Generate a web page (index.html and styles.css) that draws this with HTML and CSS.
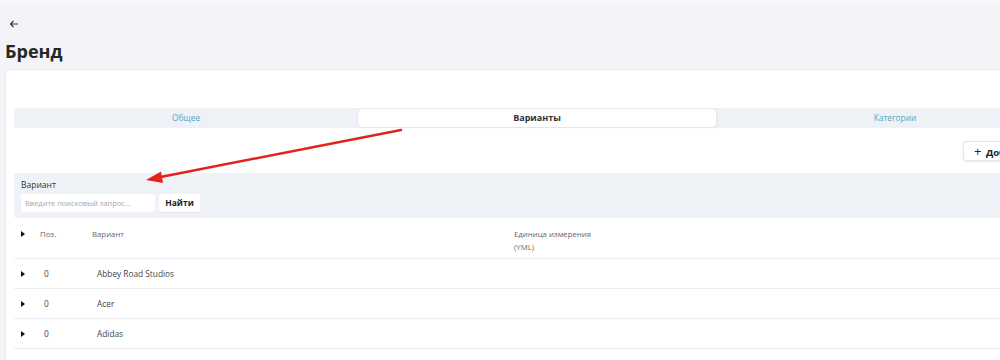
FILE: index.html
```html
<!DOCTYPE html>
<html>

	<head>
		<meta charset="UTF-8">
		<title>Бренд</title>
		<link rel="stylesheet" href="styles.css">
	</head>

	<body>
		<div class="page">
			<div class="back">
				<svg width="10" height="10" viewBox="0 0 10 10"><path d="M9 5H1.5M4.5 2L1.5 5L4.5 8" fill="none" stroke="#333" stroke-width="1.1"/></svg>
			</div>
			<h1 class="title">Бренд</h1>

			<div class="card">
				<div class="tabs">
					<div class="tab">Общее</div>
					<div class="tab active">Варианты</div>
					<div class="tab">Категории</div>
				</div>

				<div class="toolbar">
					<div class="btn-add"><span class="plus">+</span> Добавить</div>
				</div>

				<div class="filter">
					<div class="filter-label">Вариант</div>
					<div class="filter-row">
						<div class="input">Введите поисковый запрос...</div>
						<div class="btn-find">Найти</div>
					</div>
				</div>

				<div class="table">
					<div class="row head">
						<div class="c-arrow"><i class="tri"></i></div>
						<div class="c-pos">Поз.</div>
						<div class="c-name">Вариант</div>
						<div class="c-unit">Единица измерения<br>(YML)</div>
					</div>
					<div class="row">
						<div class="c-arrow"><i class="tri"></i></div>
						<div class="c-pos">0</div>
						<div class="c-name">Abbey Road Studios</div>
						<div class="c-unit"></div>
					</div>
					<div class="row">
						<div class="c-arrow"><i class="tri"></i></div>
						<div class="c-pos">0</div>
						<div class="c-name">Acer</div>
						<div class="c-unit"></div>
					</div>
					<div class="row">
						<div class="c-arrow"><i class="tri"></i></div>
						<div class="c-pos">0</div>
						<div class="c-name">Adidas</div>
						<div class="c-unit"></div>
					</div>
					<div class="row">
						<div class="c-arrow"><i class="tri"></i></div>
						<div class="c-pos">0</div>
						<div class="c-name">Aiwa</div>
						<div class="c-unit"></div>
					</div>
				</div>
			</div>
		</div>

		<!-- красная стрелка поверх страницы -->
		<svg class="pointer" width="1000" height="360" viewBox="0 0 1000 360">
			<line x1="401" y1="130" x2="158" y2="177.5" stroke="#e3221c" stroke-width="2.4" stroke-linecap="round"/>
			<polygon points="146,180 161,171.5 163,183" fill="#e3221c"/>
		</svg>
	</body>

</html>
```

FILE: styles.css
```css
* {
	margin: 0;
	padding: 0;
	box-sizing: border-box;
}

html,
body {
	width: 1000px;
	height: 360px;
	overflow: hidden;
}

body {
	background: #f3f4f8;
	font-family: "Open Sans", "Liberation Sans", sans-serif;
	color: #333;
	border-top: 3px solid #f8f9fb;
}

.page {
	padding-left: 5px;
}

.back {
	height: 10px;
	margin-top: 16px;
	padding-left: 4px;
	line-height: 0;
}

.title {
	font-size: 18px;
	font-weight: 700;
	color: #262626;
	line-height: 24px;
	margin-top: 10px;
}

.card {
	width: 1100px;
	margin-top: 6px;
	background: #fff;
	border: 1px solid #e6e9ee;
	border-radius: 4px;
	padding: 38px 0 0 8px;
}

.tabs {
	width: 1060px;
	height: 20px;
	display: grid;
	grid-template-columns: 344px 358px 358px;
	background: #eef1f5;
	border-radius: 3px;
	padding: 1px 0;
}

.tab {
	text-align: center;
	font-size: 8.3px;
	line-height: 18px;
	color: #55a3c8;
}

.tab.active {
	background: #fff;
	color: #333;
	font-size: 9px;
	font-weight: 700;
	border-radius: 4px;
	box-shadow: 0 0 2px rgba(0, 0, 0, .15);
}

.toolbar {
	width: 1060px;
	height: 45px;
	display: flex;
	justify-content: flex-end;
	align-items: center;
	padding-right: 10px;
}

.btn-add {
	width: 101px;
	height: 20px;
	background: #fff;
	border: 1px solid #e4e6ea;
	border-radius: 3px;
	box-shadow: 0 1px 2px rgba(0, 0, 0, .08);
	font-size: 9.5px;
	font-weight: 700;
	line-height: 18px;
	padding-left: 10px;
	color: #222;
}

.btn-add .plus {
	font-size: 13px;
	font-weight: 400;
	margin-right: 2px;
}

.filter {
	height: 45px;
	background: #eff2f6;
	padding: 6px 7px 0;
	border-radius: 3px 0 0 3px;
}

.filter-label {
	font-size: 8.5px;
	line-height: 12px;
	color: #333;
}

.filter-row {
	display: flex;
	gap: 4px;
	margin-top: 3px;
}

.input {
	width: 134px;
	height: 18px;
	background: #fff;
	border-radius: 3px;
	font-size: 7.5px;
	line-height: 18px;
	color: #a5a8ad;
	padding-left: 4px;
}

.btn-find {
	width: 41px;
	height: 18px;
	background: #fff;
	border-radius: 2px;
	box-shadow: 0 1px 1px rgba(0, 0, 0, .06);
	font-size: 8.5px;
	font-weight: 700;
	line-height: 18px;
	text-align: center;
	color: #222;
}

.row {
	display: flex;
	align-items: center;
	height: 30px;
	border-bottom: 1.5px solid #eceef1;
	font-size: 8.3px;
	color: #444;
}

.row.head {
	height: 41px;
	align-items: flex-start;
	padding-top: 10px;
	font-size: 7.8px;
	color: #666;
	line-height: 13px;
}

.c-arrow {
	width: 26px;
	padding-left: 7px;
	line-height: 0;
}

.row.head .c-arrow {
	padding-top: 3px;
}

.tri {
	display: inline-block;
	width: 0;
	height: 0;
	border-top: 3px solid transparent;
	border-bottom: 3px solid transparent;
	border-left: 4px solid #111;
}

.c-pos {
	width: 52px;
}

.row:not(.head) .c-pos {
	padding-left: 4px;
}

.c-name {
	width: 422px;
}

.row:not(.head) .c-name {
	padding-left: 5px;
}

.c-unit {
	flex: 1;
}

.pointer {
	position: absolute;
	left: 0;
	top: 0;
	pointer-events: none;
}
```
